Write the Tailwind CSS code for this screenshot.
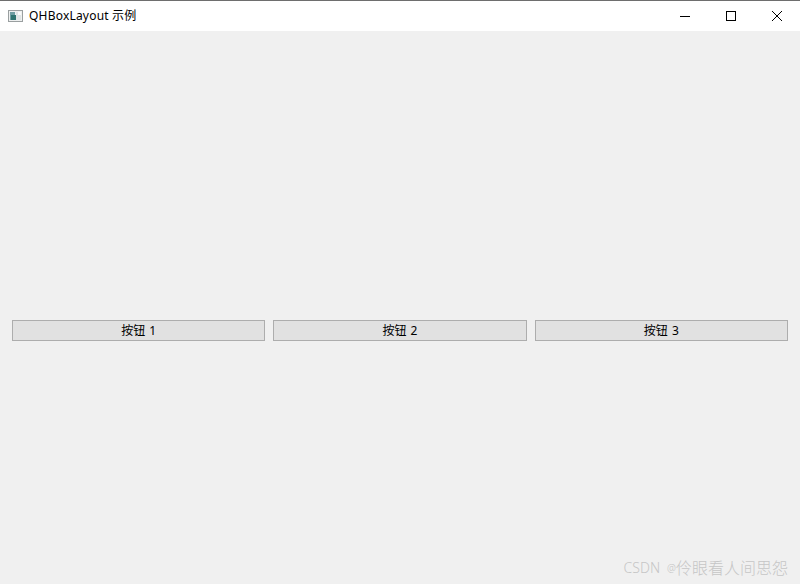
<!DOCTYPE html>
<html>
<head>
<meta charset="utf-8">
<script src="https://cdn.jsdelivr.net/npm/@tailwindcss/browser@4"></script>
</head>
<body class="w-[800px] h-[584px] overflow-hidden bg-[#f0f0f0] font-['Noto_Sans','Noto_Sans_CJK_SC',sans-serif] text-black">
<div class="relative flex flex-col h-[584px]">
  <header class="h-[31px] shrink-0 bg-white border-t border-[#6e6e6e] flex items-center">
    <svg class="ml-[8px] mr-[6px] shrink-0" width="15" height="14" viewBox="0 0 15 14">
      <rect x="0.5" y="1.5" width="14" height="11" fill="#eef0f0" stroke="#9a9fa0"/>
      <rect x="2" y="3" width="5" height="8" fill="#6f9ea3"/>
      <rect x="3" y="6" width="5" height="5" fill="#2f7470"/>
      <rect x="8" y="3" width="5" height="8" fill="#dfe5e5"/>
      <rect x="10" y="3" width="3" height="3" fill="#fafbfb"/>
    </svg>
    <span class="text-[12px] leading-[16px] mt-[-1px] tracking-[0.2px]">QHBoxLayout 示例</span>
    <div class="ml-auto flex h-full">
      <div class="w-[46px] flex items-center justify-center"><svg width="12" height="12" viewBox="0 0 12 12"><path d="M1 6.5H11" stroke="#000" fill="none"/></svg></div>
      <div class="w-[46px] flex items-center justify-center"><svg width="12" height="12" viewBox="0 0 12 12"><rect x="1.5" y="1.5" width="9" height="9" stroke="#000" fill="none"/></svg></div>
      <div class="w-[46px] flex items-center justify-center"><svg width="12" height="12" viewBox="0 0 12 12"><path d="M1 1L11 11M11 1L1 11" stroke="#000" fill="none" stroke-width="1"/></svg></div>
    </div>
  </header>
  <main class="flex-1 flex items-center gap-[8px] px-[12px] pt-[46px]">
    <button class="flex-1 h-[21px] bg-[#e1e1e1] border border-[#adadad] text-[12px] leading-none [word-spacing:1px]">按钮 1</button>
    <button class="flex-1 h-[21px] bg-[#e1e1e1] border border-[#adadad] text-[12px] leading-none [word-spacing:1px]">按钮 2</button>
    <button class="flex-1 h-[21px] bg-[#e1e1e1] border border-[#adadad] text-[12px] leading-none [word-spacing:1px]">按钮 3</button>
  </main>
  <div class="absolute right-[12px] top-[558px] flex items-center text-[#c6c6c6] font-light leading-[20px] whitespace-nowrap">
    <span class="text-[14px] ml-[1px]">CSDN</span><span class="text-[10px] ml-[7px]">@</span><span class="text-[16px]">伶眼看人间思怨</span>
  </div>
</div>
</body>
</html>
